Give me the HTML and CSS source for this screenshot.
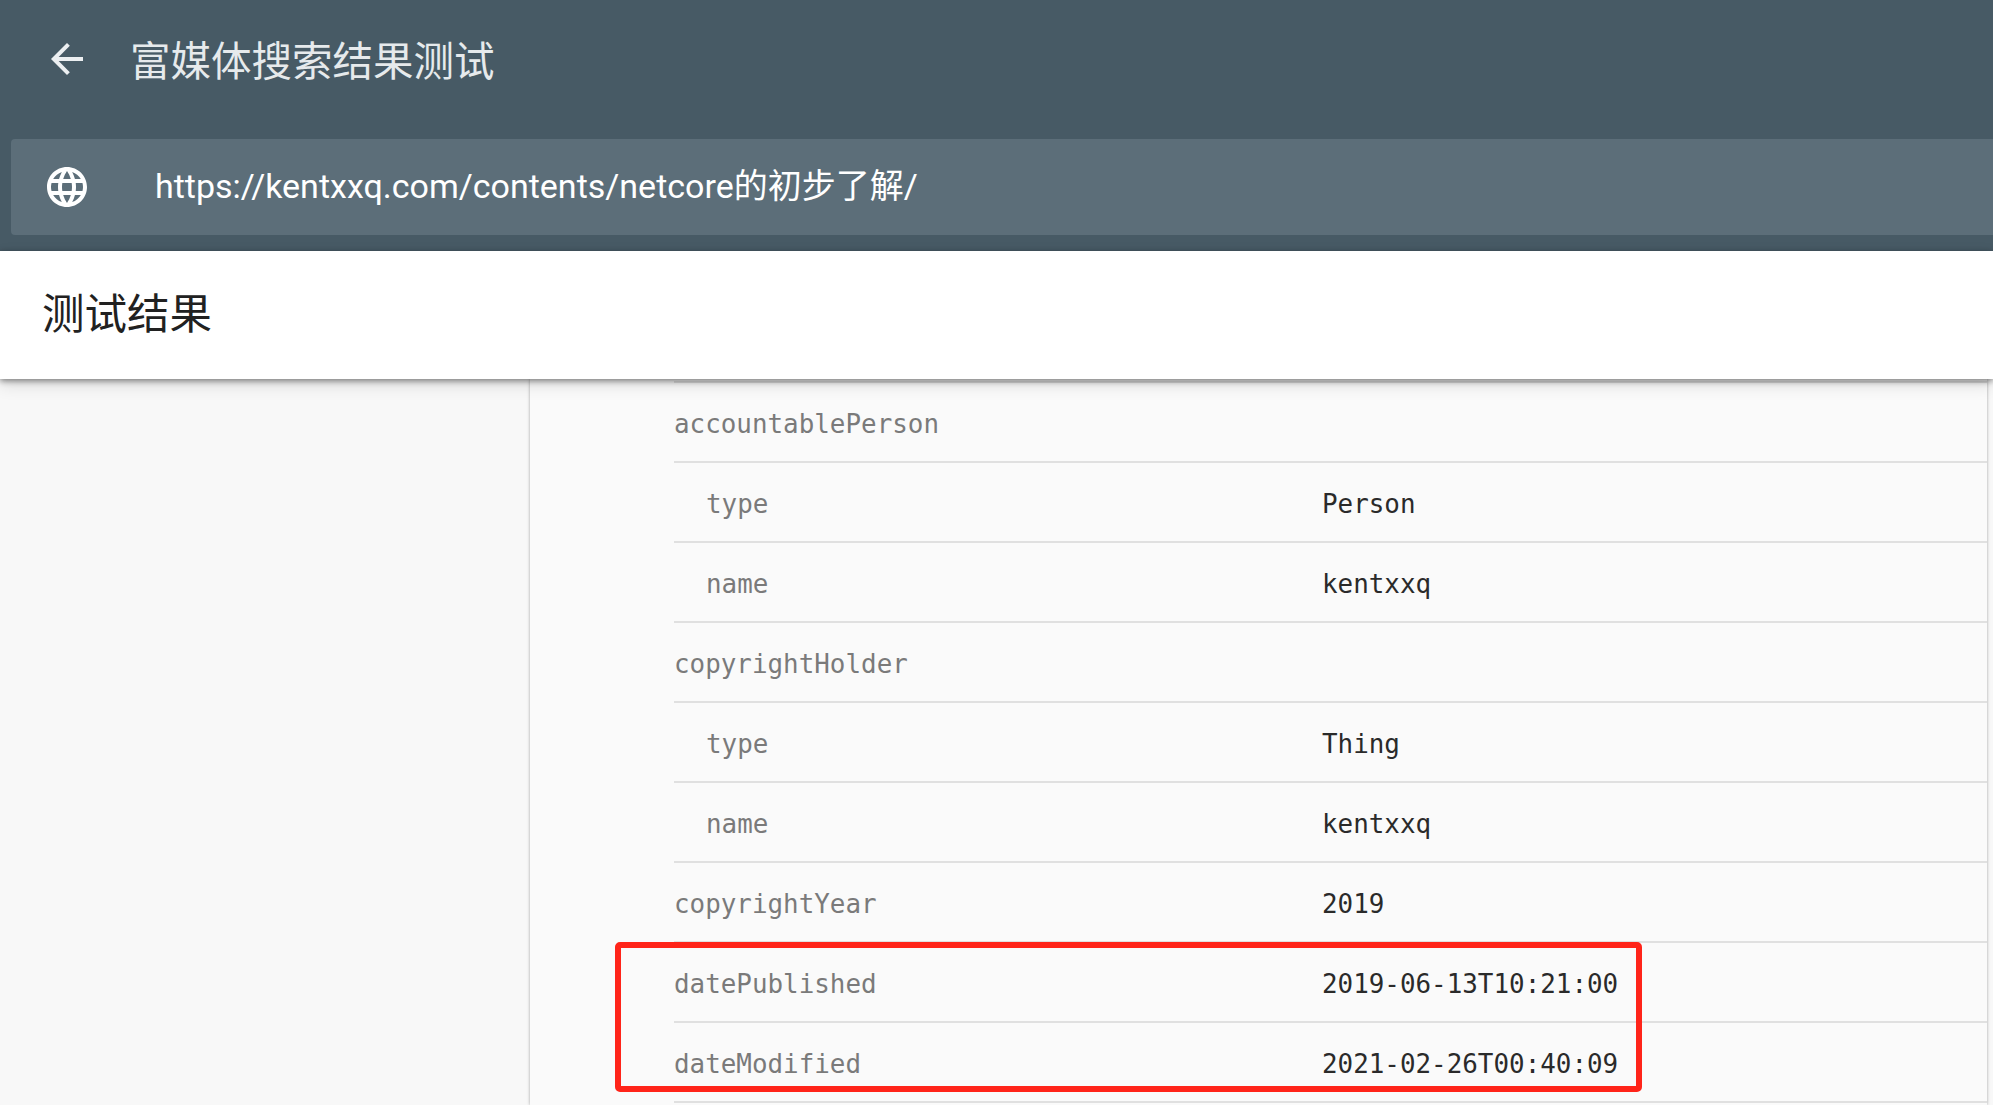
FILE: index.html
```html
<!DOCTYPE html>
<html lang="zh-CN">
<head>
  <meta charset="utf-8">
  <title>富媒体搜索结果测试</title>
  <link rel="stylesheet" href="styles.css">
</head>
<body>
  <header class="top">
    <div class="top-row">
      <svg class="icon back" viewBox="0 0 24 24"><path d="M20 11H7.83l5.59-5.59L12 4l-8 8 8 8 1.41-1.41L7.83 13H20v-2z"/></svg>
      <h1>富媒体搜索结果测试</h1>
    </div>
    <div class="url-box">
      <svg class="icon" viewBox="0 0 24 24"><path d="M11.99 2C6.47 2 2 6.48 2 12s4.47 10 9.99 10C17.52 22 22 17.52 22 12S17.52 2 11.99 2zm6.93 6h-2.95c-.32-1.25-.78-2.45-1.38-3.56 1.84.63 3.37 1.91 4.33 3.56zM12 4.04c.83 1.2 1.48 2.53 1.91 3.96h-3.82c.43-1.43 1.08-2.76 1.91-3.96zM4.26 14C4.1 13.36 4 12.69 4 12s.1-1.36.26-2h3.38c-.08.66-.14 1.32-.14 2 0 .68.06 1.34.14 2H4.26zm.82 2h2.95c.32 1.25.78 2.45 1.38 3.56-1.84-.63-3.37-1.9-4.33-3.56zm2.95-8H5.08c.96-1.66 2.49-2.93 4.33-3.56C8.81 5.55 8.35 6.75 8.03 8zM12 19.96c-.83-1.2-1.48-2.53-1.91-3.96h3.82c-.43 1.43-1.08 2.76-1.91 3.96zM14.34 14H9.66c-.09-.66-.16-1.32-.16-2 0-.68.07-1.35.16-2h4.68c.09.65.16 1.32.16 2 0 .68-.07 1.34-.16 2zm.25 5.56c.6-1.11 1.06-2.31 1.38-3.56h2.95c-.96 1.65-2.49 2.93-4.33 3.56zM16.36 14c.08-.66.14-1.32.14-2 0-.68-.06-1.34-.14-2h3.38c.16.64.26 1.31.26 2s-.1 1.36-.26 2h-3.38z"/></svg>
      <span class="url">https://kentxxq.com/contents/netcore的初步了解/</span>
    </div>
  </header>

  <div class="result-bar">测试结果</div>

  <main class="content">
    <div class="side"></div>
    <section class="panel">
      <div class="table">
        <div class="row"><span class="key">accountablePerson</span><span class="val"></span></div>
        <div class="row sub"><span class="key">type</span><span class="val">Person</span></div>
        <div class="row sub"><span class="key">name</span><span class="val">kentxxq</span></div>
        <div class="row"><span class="key">copyrightHolder</span><span class="val"></span></div>
        <div class="row sub"><span class="key">type</span><span class="val">Thing</span></div>
        <div class="row sub"><span class="key">name</span><span class="val">kentxxq</span></div>
        <div class="row"><span class="key">copyrightYear</span><span class="val">2019</span></div>
        <div class="row"><span class="key">datePublished</span><span class="val">2019-06-13T10:21:00</span></div>
        <div class="row"><span class="key">dateModified</span><span class="val">2021-02-26T00:40:09</span></div>
      </div>
      <div class="mark"></div>
    </section>
  </main>
</body>
</html>
```

FILE: styles.css
```css
* {
  box-sizing: border-box;
}

html, body {
  height: 100%;
}

body {
  margin: 0;
  background-color: #f8f8f8;
  font-family: Roboto, "Noto Sans CJK SC", sans-serif;
  overflow: hidden;
  display: flex;
  flex-direction: column;
}

.top {
  height: 251px;
  flex: none;
  background-color: #475a65;
  color: #fff;
}

.top-row {
  height: 139px;
  padding: 0 0 21px 43px;
  display: flex;
  align-items: center;
  gap: 39px;
}

.icon {
  width: 48px;
  height: 48px;
  flex: none;
  fill: #fff;
}

.back {
  fill: #eceff1;
}

h1 {
  margin: 0 0 2px;
  font-size: 40.5px;
  font-weight: 400;
  color: #e6eaec;
}

.url-box {
  height: 96px;
  margin-left: 11px;
  padding-left: 32px;
  background-color: #5c6e79;
  border-radius: 4px 0 0 4px;
  display: flex;
  align-items: center;
  gap: 64px;
}

.url {
  font-size: 34px;
  padding-bottom: 7px;
}

.result-bar {
  height: 128px;
  flex: none;
  padding-left: 42px;
  background-color: #fff;
  color: #212121;
  font-size: 42.5px;
  line-height: 128px;
  position: relative;
  z-index: 2;
  box-shadow: 0 2px 6px rgba(0, 0, 0, 0.45), 0 6px 16px rgba(0, 0, 0, 0.12);
}

.content {
  flex: 1;
  display: flex;
  min-height: 0;
}

.side {
  width: 530px;
  flex: none;
}

.panel {
  width: 1457px;
  flex: none;
  padding: 2px 0 0 144px;
  background-color: #fafafa;
  box-shadow: 0 0 3px rgba(0, 0, 0, 0.35);
  position: relative;
}

.table {
  border-top: 2px solid #e0e0e0;
}

.row {
  height: 80px;
  padding-top: 4px;
  display: flex;
  align-items: center;
  border-bottom: 2px solid #e0e0e0;
  font-family: "DejaVu Sans Mono", monospace;
  font-size: 25.9px;
}

.key {
  width: 648px;
  flex: none;
  color: #7a7a7a;
}

.sub .key {
  padding-left: 32px;
}

.val {
  color: #2a2a2a;
}

.mark {
  position: absolute;
  left: 85px;
  top: 563px;
  width: 1027px;
  height: 150px;
  border: 6px solid #ff2419;
  border-radius: 5px;
}
```
